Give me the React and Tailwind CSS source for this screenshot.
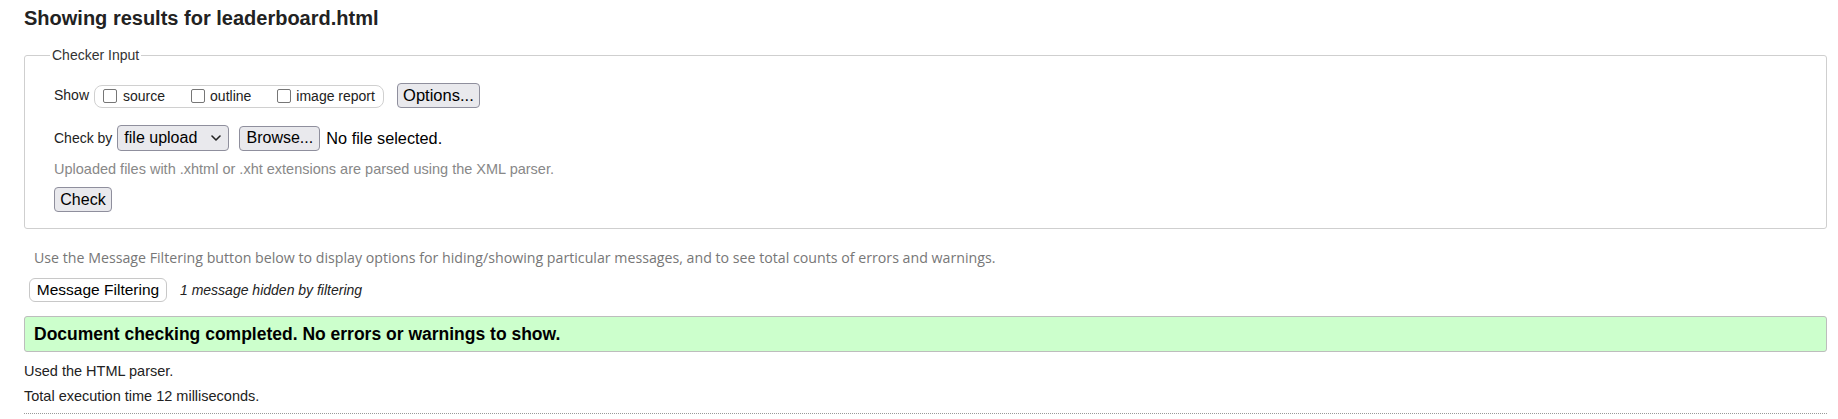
import React from "react";

function Box() {
  return <span className="block w-[14px] h-[14px] border border-[#767676] rounded-[2px] bg-white shrink-0" />;
}

function Chevron() {
  return (
    <svg width="10" height="6" viewBox="0 0 10 6" className="shrink-0">
      <path d="M1 1 L5 5 L9 1" fill="none" stroke="#222" strokeWidth="1.6" strokeLinecap="round" strokeLinejoin="round" />
    </svg>
  );
}

export default function App() {
  return (
    <div className="font-['Liberation_Sans',Arial,sans-serif] text-[#222] bg-white min-h-[419px] pl-[24px] pr-[11px]">
      <h2 className="pt-[6px] text-[20px] leading-[24px] font-bold text-[#222]">Showing results for leaderboard.html</h2>

      <fieldset className="mt-[17px] border border-[#cfcfcf] rounded-[3px] pl-[29px] pr-[10px] pb-[16px]">
        <legend className="-ml-[4px] px-[2px] text-[14px] leading-[16px] text-[#333]">Checker Input</legend>

        <div className="mt-[19px] flex items-center h-[26px] text-[14px]">
          <span className="text-[#222]">Show</span>
          <div className="ml-[5px] mt-[2px] flex items-center h-[23px] border border-[#d0d0d0] rounded-[8px] pl-[8px] pr-[8px] text-[14px] text-[#222]">
            <Box />
            <span className="ml-[6px]">source</span>
            <span className="ml-[26px]"><Box /></span>
            <span className="ml-[5px]">outline</span>
            <span className="ml-[26px]"><Box /></span>
            <span className="ml-[5px]">image report</span>
          </div>
          <button className="ml-[13px] h-[25px] w-[83px] bg-[#e9e9ed] border border-[#8f8f9d] rounded-[4px] text-[16.5px] text-black leading-none">Options...</button>
        </div>

        <div className="mt-[17px] flex items-center h-[26px] text-[14px]">
          <span>Check by</span>
          <div className="ml-[5px] flex items-center justify-between h-[26px] w-[112px] bg-[#e9e9ed] border border-[#8f8f9d] rounded-[4px] pl-[6px] pr-[7px] text-[16px] text-black">
            <span>file upload</span>
            <Chevron />
          </div>
          <button className="ml-[10px] h-[25px] w-[81px] bg-[#e9e9ed] border border-[#8f8f9d] rounded-[4px] text-[16px] text-black leading-none">Browse...</button>
          <span className="ml-[6px] text-[16.3px] text-black">No file selected.</span>
        </div>

        <div className="mt-[10px] text-[14.5px] leading-[16px] text-[#888]">Uploaded files with .xhtml or .xht extensions are parsed using the XML parser.</div>

        <button className="mt-[10px] block h-[25px] w-[58px] bg-[#e9e9ed] border border-[#8f8f9d] rounded-[4px] text-[16px] text-black leading-none">Check</button>
      </fieldset>

      <p className="mt-[20px] ml-[10px] text-[14.2px] leading-[18px] text-[#777] font-['Open_Sans',sans-serif]">Use the Message Filtering button below to display options for hiding/showing particular messages, and to see total counts of errors and warnings.</p>

      <div className="mt-[11px] flex items-center h-[24px] ml-[5px]">
        <button className="h-[24px] w-[138px] bg-white border border-[#c8c8c8] rounded-[6px] text-[15.5px] text-black leading-none">Message Filtering</button>
        <span className="ml-[13px] text-[14px] italic text-[#222]">1 message hidden by filtering</span>
      </div>

      <div className="mt-[14px] h-[36px] flex items-center bg-[#ccffcc] border border-[#bdbdbd] rounded-[3px] pl-[9px] text-[17.5px] font-bold text-black">
        Document checking completed. No errors or warnings to show.
      </div>

      <p className="mt-[10px] text-[14.5px] leading-[18px] text-[#222]">Used the HTML parser.</p>
      <p className="mt-[7px] text-[14.5px] leading-[18px] text-[#222]">Total execution time 12 milliseconds.</p>
      <div className="mt-[8px] border-t border-dotted border-[#999]" />
    </div>
  );
}
